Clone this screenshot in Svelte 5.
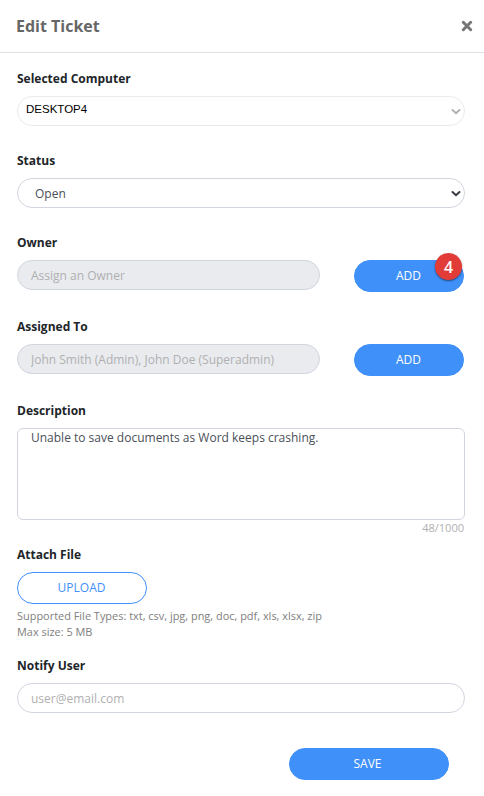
<script lang="ts">
    let status = "Open";
    let description = "Unable to save documents as Word keeps crashing.";
    let email = "";

    const maxLength = 1000;
    const owner = "";
    const assignedTo = "John Smith (Admin), John Doe (Superadmin)";
    const fileTypes = "txt, csv, jpg, png, doc, pdf, xls, xlsx, zip";
</script>

<section>
    <header>
        <h1>Edit Ticket</h1>
        <button class="close" aria-label="Close">
            <svg width="12" height="12" viewBox="0 0 12 12">
                <path d="M2.3 2.3L9.7 9.7M9.7 2.3L2.3 9.7" />
            </svg>
        </button>
    </header>

    <form>
        <div class="field">
            <label for="computer">Selected Computer</label>
            <div class="select muted">
                <select id="computer" disabled>
                    <option>DESKTOP4</option>
                </select>
                <svg width="10" height="7" viewBox="0 0 10 7">
                    <path d="M1.5 2L5 5.2L8.5 2" />
                </svg>
            </div>
        </div>

        <div class="field">
            <label for="status">Status</label>
            <div class="select">
                <select id="status" bind:value={status}>
                    <option>Open</option>
                    <option>Closed</option>
                </select>
                <svg width="10" height="7" viewBox="0 0 10 7">
                    <path d="M1.5 2L5 5.2L8.5 2" />
                </svg>
            </div>
        </div>

        <div class="field">
            <label for="owner">Owner</label>
            <div class="row">
                <input id="owner" placeholder="Assign an Owner" value={owner} disabled />
                <button type="button" class="btn add">
                    ADD
                    <span class="badge">4</span>
                </button>
            </div>
        </div>

        <div class="field">
            <label for="assigned">Assigned To</label>
            <div class="row">
                <input id="assigned" value={assignedTo} disabled />
                <button type="button" class="btn add">ADD</button>
            </div>
        </div>

        <div class="field description">
            <label for="description">Description</label>
            <textarea id="description" maxlength={maxLength} spellcheck="false" bind:value={description}></textarea>
            <span class="count">{description.length}/{maxLength}</span>
        </div>

        <div class="field attach">
            <span class="label">Attach File</span>
            <button type="button" class="btn upload">UPLOAD</button>
            <p>Supported File Types: {fileTypes}<br />Max size: 5 MB</p>
        </div>

        <div class="field notify">
            <label for="email">Notify User</label>
            <input id="email" type="email" placeholder="user@email.com" bind:value={email} />
        </div>

        <button type="button" class="btn save">SAVE</button>
    </form>
</section>

<style>
    :global(body) {
        background-color: #fff;
    }
    section {
        font-family: "Open Sans", "Noto Sans", sans-serif;
        font-size: 12px;
        color: #495057;
    }
    section * {
        box-sizing: border-box;
    }
    header {
        display: flex;
        align-items: center;
        justify-content: space-between;
        height: 53px;
        padding: 0 11px 1px 16px;
        border-bottom: 1px solid #dee2e6;
    }
    h1 {
        margin: 0;
        font-size: 16px;
        font-weight: 700;
        color: #666;
    }
    .close {
        display: flex;
        padding: 0;
        border: 0;
        background: none;
    }
    svg path {
        fill: none;
        stroke: #343a40;
        stroke-width: 2;
        stroke-linecap: round;
    }
    .close path {
        stroke: #777;
        stroke-width: 3;
    }
    form {
        display: flex;
        flex-direction: column;
        padding: 17px 19px 16px 17px;
    }
    .field {
        display: flex;
        flex-direction: column;
        margin-bottom: 26px;
    }
    label,
    .label {
        height: 18px;
        margin-bottom: 8px;
        line-height: 18px;
        font-weight: 700;
        color: #212529;
    }
    input,
    select,
    textarea {
        display: block;
        width: 100%;
        height: 30px;
        margin: 0;
        padding: 0 13px;
        border: 1px solid #d1d5de;
        border-radius: 15px;
        background-color: #fff;
        font-family: inherit;
        font-size: 12px;
        color: #495057;
        outline: none;
    }
    input::placeholder {
        color: #b0b0b0;
        opacity: 1;
    }
    input:disabled {
        background-color: #e9ebef;
        color: #b0b0b0;
    }
    .select {
        display: grid;
        align-items: center;
    }
    .select > * {
        grid-area: 1 / 1;
    }
    .select svg {
        justify-self: end;
        margin-right: 4px;
        pointer-events: none;
    }
    select {
        appearance: none;
        padding-left: 17px;
    }
    .muted select {
        padding: 0 8px 5px;
        border-color: #ebebeb;
        font-family: "Liberation Sans", Arial, sans-serif;
        font-size: 11.5px;
        color: #000;
        opacity: 1;
    }
    .muted path {
        stroke: #b0b0b0;
    }
    .row {
        display: flex;
        gap: 34px;
        height: 32px;
        padding-right: 1px;
    }
    .row input {
        flex: 1;
        min-width: 0;
    }
    .btn {
        height: 32px;
        padding: 0 1px 2px 0;
        border: 1px solid #3f90f9;
        border-radius: 16px;
        background-color: #3f90f9;
        font-family: inherit;
        font-size: 12px;
        color: #fff;
    }
    .add {
        position: relative;
        width: 110px;
    }
    .badge {
        position: absolute;
        top: -8px;
        right: 1px;
        width: 27px;
        height: 27px;
        border-radius: 50%;
        background-color: #e23c39;
        box-shadow: 0 1px 2px rgba(0, 0, 0, 0.5);
        font-size: 16px;
        font-weight: 600;
        line-height: 28px;
        text-align: center;
    }
    .description {
        margin-bottom: 10px;
    }
    textarea {
        height: 92px;
        padding: 0 13px;
        border-radius: 6px;
        line-height: 18px;
        resize: none;
    }
    .count {
        align-self: flex-end;
        margin-right: 1px;
        font-size: 11px;
        line-height: 16px;
        color: #b0b0b0;
    }
    .attach {
        margin-bottom: 17px;
    }
    .upload {
        width: 130px;
        background-color: #fff;
        color: #3f90f9;
    }
    .attach p {
        margin: 4px 0 0;
        font-size: 10.95px;
        line-height: 16px;
        color: #808080;
    }
    .notify {
        margin-bottom: 35px;
    }
    .save {
        align-self: flex-end;
        width: 160px;
        margin-right: 16px;
        padding-right: 3px;
    }
</style>
